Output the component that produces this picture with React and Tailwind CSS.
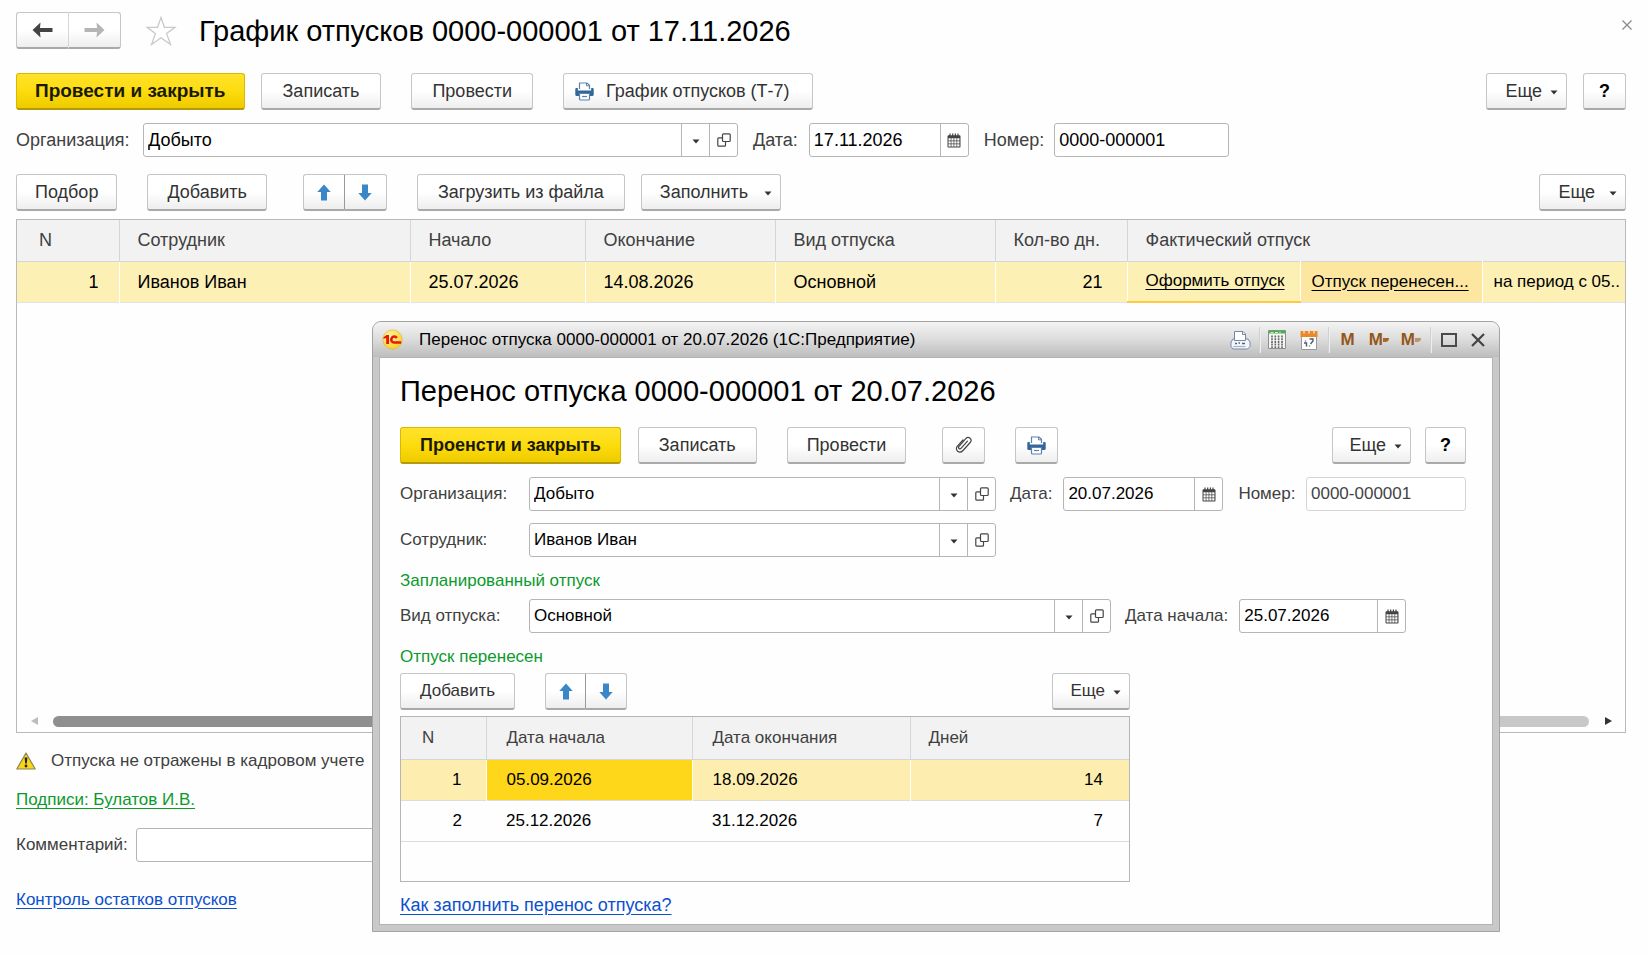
import { useState } from 'react';
import clsx from 'clsx';

/* ---------- icons ---------- */

const Caret = () => (
    <svg width="8" height="7" viewBox="0 0 8 7" className="shrink-0" aria-hidden="true">
        <path d="M0.5 2.500h7L4 6.500z" fill="#333" />
    </svg>
);

const NavArrow = ({ flip, color }) => (
    <svg width="21" height="16" viewBox="0 0 21 16" className={clsx(flip && 'rotate-180')} aria-hidden="true">
        <path d="M0.5 8 8.500 0.500 8 6h12.500v4H8l.5 5.500z" fill={color} />
    </svg>
);

const MoveArrow = ({ down }) => (
    <svg width="14" height="17" viewBox="0 0 14 17" className={clsx(down && 'rotate-180')} aria-hidden="true">
        <path d="M7 0.500 13.700 8H10v8.500H4V8H0.300z" fill="#3a87c8" />
    </svg>
);

const StarIcon = () => (
    <svg width="32" height="32" viewBox="0 0 32 32" aria-hidden="true">
        <path
            d="M16 2.500 19.400 12.300H30L21.600 18.600 25.500 29.500 16 22.800 6.500 29.500 10.400 18.600 2 12.300H12.600z"
            fill="#fff"
            stroke="#c9c9c9"
            strokeWidth="1.300"
        />
    </svg>
);

const PrinterIcon = () => (
    <svg width="19" height="19" viewBox="0 0 19 19" className="shrink-0" aria-hidden="true">
        <path d="M4.500 7V1h7.500l2.500 2.300V7" fill="#fff" stroke="#5b83ad" strokeWidth="1.200" />
        <path d="M11.500 1v2.800h3" fill="none" stroke="#5b83ad" />
        <path d="M1.500 6h1.300v2.500h13.400V6h1.300c.8 0 1.200.5 1.200 1.200v5.600c0 .7-.5 1.200-1.200 1.200h-16c-.7 0-1.200-.5-1.200-1.200V7.200C.3 6.500.8 6 1.500 6z" fill="#336699" />
        <path d="M4.500 11.500h10V17c0 .6-.4 1-1 1h-8c-.6 0-1-.4-1-1z" fill="#fff" stroke="#5b83ad" strokeWidth="1.200" />
        <path d="M7 14.500h5" stroke="#5b83ad" strokeWidth="1.200" />
    </svg>
);

const OpenIcon = () => (
    <svg width="14" height="14" viewBox="0 0 14 14" fill="none" stroke="#444" strokeWidth="1.200" aria-hidden="true">
        <rect x="5.500" y="0.800" width="7.700" height="7.700" rx="1" />
        <path d="M5.500 4.800H1.800c-.6 0-1 .4-1 1v6.400c0 .6.4 1 1 1h5.700c.6 0 1-.4 1-1V8.500" />
    </svg>
);

const CalendarIcon = () => (
    <svg width="14" height="15" viewBox="0 0 14 15" aria-hidden="true">
        <path d="M0.500 3.500c0-.8.4-1.200 1.200-1.200h10.600c.8 0 1.200.4 1.200 1.200v10c0 .6-.4 1-1 1h-11c-.6 0-1-.4-1-1z" fill="#444" />
        <path d="M3 0.500v3M5.700 0.500v3M8.400 0.500v3M11 0.500v3" stroke="#444" strokeWidth="1.200" />
        <path
            d="M1.500 5.300h2.200v2.200H1.500zM4.400 5.300h2.200v2.200H4.400zM7.300 5.300h2.200v2.200H7.300zM10.200 5.300h2.200v2.200h-2.200zM1.500 8.300h2.200v2.200H1.500zM4.400 8.300h2.200v2.200H4.400zM7.300 8.300h2.200v2.200H7.300zM10.200 8.300h2.200v2.200h-2.200zM1.500 11.300h2.200v2.200H1.500zM4.400 11.300h2.200v2.200H4.400zM7.300 11.300h2.200v2.200H7.300zM10.200 11.300h2.200v2.200h-2.200z"
            fill="#fff"
        />
    </svg>
);

const ClipIcon = () => (
    <svg width="18" height="18" viewBox="0 0 18 18" fill="none" stroke="#444" strokeWidth="1.200" strokeLinecap="round" aria-hidden="true">
        <path d="M12.500 5.200 6.200 12.200c-.7.800-1.600.8-2.200.3-.7-.6-.6-1.500 0-2.200L10.800 2.700c1.200-1.300 3-1.400 4.200-.4 1.300 1.100 1.300 2.900.2 4.200L8 14.500c-1.500 1.700-3.800 2-5.400.7-1.500-1.300-1.600-3.500-.2-5.100L8 3.800" />
    </svg>
);

const WarningIcon = () => (
    <svg width="20" height="18" viewBox="0 0 20 18" aria-hidden="true">
        <path d="M10 1 19.200 17H0.800z" fill="#f9d616" stroke="#8b8458" strokeWidth="1.200" strokeLinejoin="round" />
        <path d="M8.600 5.500h2.800l-.6 6H9.200z" fill="#222" />
        <circle cx="10" cy="14" r="1.400" fill="#222" />
    </svg>
);

const Logo = () => (
    <svg width="21" height="21" viewBox="0 0 21 21" className="shrink-0" aria-hidden="true">
        <defs>
            <radialGradient id="logo" cx="0.4" cy="0.3" r="0.8">
                <stop offset="0" stopColor="#fff7a0" />
                <stop offset="1" stopColor="#fbc812" />
            </radialGradient>
        </defs>
        <circle cx="10.500" cy="10.500" r="9.700" fill="url(#logo)" stroke="#d9b44a" strokeWidth="0.600" />
        <path d="M1.500 8.200 4.500 6h2.500v9H4.200V9L1.500 9.800z" fill="#e3180f" />
        <path d="M14.800 9a3 3 0 1 0-2.600 4.600h7" fill="none" stroke="#e3180f" strokeWidth="2.500" />
    </svg>
);

const TitlePrinterIcon = () => (
    <svg width="21" height="20" viewBox="0 0 21 20" aria-hidden="true">
        <path d="M4.500 10V1.500h8.500l2.500 2.500v6" fill="#fff" stroke="#7788a2" />
        <path d="M12.500 1.500v3h3" fill="none" stroke="#7788a2" />
        <path d="M4.500 9H3l-2 3v4.500L3 19h14.500l2.500-2.500V12l-2-3h-2.500v1.500h-11z" fill="#f4f6fa" stroke="#7788a2" />
        <path d="M5 13.500h2M8.500 13h1.500M12 13.500h3" stroke="#4c6390" strokeWidth="1.600" />
        <path d="M3.500 16.500h12" stroke="#a7b2c4" strokeWidth="1.200" />
    </svg>
);

const CalcIcon = () => (
    <svg width="18" height="19" viewBox="0 0 18 19" aria-hidden="true">
        <path d="M0.500 0.500h17v18H0.500z" fill="#f6f6f6" stroke="#8b8f8b" />
        <path d="M1 1h16v2.500H1z" fill="#45b045" />
        <path d="M2.500 2.500h3M7 2.500h3M12 1.500v2" stroke="#c9efc9" />
        <path d="M4 5.500V18M7.300 5.500V18M10.600 5.500V18M14 5.500V18" stroke="#666" strokeWidth="1.600" strokeDasharray="2 0.700" />
    </svg>
);

const DayIcon = () => (
    <svg width="18" height="20" viewBox="0 0 18 20" aria-hidden="true">
        <path d="M1.500 3h15v16.500h-15z" fill="#fff" stroke="#9a9a9a" />
        <path d="M0.500 1h17v6H0.500z" fill="#e88a2b" />
        <path d="M4 0v3.500M9 0v3.500M14 0v3.500" stroke="#fbe0bd" strokeWidth="1.400" />
        <path d="M4 13h2.500v3.500M9.500 9h3.500v2l-2.500 3M5.500 10.500v1M9.500 15.500v1" fill="none" stroke="#4e5a70" strokeWidth="1.400" />
    </svg>
);

/* ---------- controls ---------- */

const buttonBase =
    'inline-flex h-[37px] shrink-0 items-center justify-center whitespace-nowrap rounded-[3px] border border-[#c6c6c6] border-b-2 border-b-[#a9a9a9] bg-linear-to-b from-white from-50% to-[#eeeeee]';

const Button = ({ className, children, ...props }) => (
    <button type="button" className={clsx(buttonBase, 'text-[#333]', className)} {...props}>
        {children}
    </button>
);

const PrimaryButton = ({ className, children }) => (
    <button
        type="button"
        className={clsx(
            'inline-flex h-[37px] shrink-0 items-center whitespace-nowrap rounded-[3px] border border-[#d8b900] border-b-2 border-b-[#b39a06] bg-linear-to-b from-[#ffe22a] via-[#fddc0c] to-[#eecb00] font-bold text-[#1a1a00]',
            className
        )}
    >
        {children}
    </button>
);

const MoreButton = ({ className = 'gap-2 pl-[18px]' }) => (
    <Button className={clsx('pr-2', className)}>
        Еще
        <Caret />
    </Button>
);

const MoveButtons = ({ size = 'w-[42px]' }) => (
    <div className="flex">
        <Button aria-label="Переместить вверх" className={clsx('rounded-r-none border-r-[#999]', size)}>
            <MoveArrow />
        </Button>
        <Button aria-label="Переместить вниз" className={clsx('rounded-l-none border-l-0', size)}>
            <MoveArrow down />
        </Button>
    </div>
);

const FieldButton = ({ label, children }) => (
    <button type="button" aria-label={label} className="flex w-7 shrink-0 items-center justify-center border-l border-[#b5b5b5]">
        {children}
    </button>
);

const Field = ({ id, value, kind, muted, className }) => {
    const [text, setText] = useState(value);
    return (
        <div className={clsx('flex h-[34px] overflow-hidden rounded-[3px] border bg-white', muted ? 'border-[#d4d4d4]' : 'border-[#b5b5b5]', className)}>
            <input
                id={id}
                type="text"
                value={text}
                onChange={(e) => setText(e.target.value)}
                className={clsx('w-full min-w-0 flex-1 bg-transparent px-1 outline-none', muted ? 'text-[#444]' : 'text-black')}
            />
            {kind === 'ref' && (
                <>
                    <FieldButton label="Выбрать из списка">
                        <Caret />
                    </FieldButton>
                    <FieldButton label="Открыть">
                        <OpenIcon />
                    </FieldButton>
                </>
            )}
            {kind === 'date' && (
                <FieldButton label="Календарь">
                    <CalendarIcon />
                </FieldButton>
            )}
        </div>
    );
};

const Label = ({ htmlFor, className, children }) => (
    <label htmlFor={htmlFor} className={clsx('shrink-0 whitespace-nowrap text-[#404040]', className)}>
        {children}
    </label>
);

const Separator = () => <span className="h-[26px] w-px bg-[#d0d0d0] shadow-[1px_0_0_#eeeeee]" />;

/* ---------- transfer window ---------- */

const transferRows = [
    { n: 1, from: '05.09.2026', to: '18.09.2026', days: 14 },
    { n: 2, from: '25.12.2026', to: '31.12.2026', days: 7 },
];

const TransferWindow = () => (
    <section className="absolute left-[372px] right-[147px] top-[321px] rounded-t-[9px] border border-[#a3a3a3] bg-[#c9c9c9] px-1.5 pb-1.5 text-[17px]">
        <header className="-mx-1.5 flex h-[35px] items-center rounded-t-[8px] bg-linear-to-b from-[#f4f4f4] via-[#dcdcdc] to-[#bdbdbd] pl-[9px] pr-3.5">
            <Logo />
            <span className="ml-4 whitespace-nowrap text-black">Перенос отпуска 0000-000001 от 20.07.2026 (1С:Предприятие)</span>
            <div className="ml-auto flex items-center">
                <button type="button" aria-label="Печать" className="mr-2"><TitlePrinterIcon /></button>
                <Separator />
                <button type="button" aria-label="Калькулятор" className="ml-2"><CalcIcon /></button>
                <button type="button" aria-label="Календарь" className="ml-3.5 mr-[10px]"><DayIcon /></button>
                <Separator />
                <div className="flex items-center gap-3 pl-[11px] pr-[9px] font-bold text-[#95561a]">
                    <button type="button" className="mr-0.5">M</button>
                    <button type="button" className="flex items-center">M<span className="h-1 w-1.5 rounded-br-sm bg-[#a8661f]" /></button>
                    <button type="button" className="flex items-center">M<span className="h-1 w-1.5 rounded-br-sm bg-[#bd9468]" /></button>
                </div>
                <Separator />
                <button type="button" aria-label="Развернуть" className="ml-[10px] h-3.5 w-4 border-2 border-[#4a4a4a]" />
                <button type="button" aria-label="Закрыть" className="ml-3.5">
                    <svg width="14" height="14" viewBox="0 0 14 14" stroke="#444" strokeWidth="2.200" aria-hidden="true">
                        <path d="M1 1l12 12M13 1 1 13" />
                    </svg>
                </button>
            </div>
        </header>

        <div className="border border-[#b3b3b3] bg-[#fefefe] pb-[7px] pl-5 pr-[26px] pt-[17px]">
            <h2 className="text-[29px] leading-8 text-black">Перенос отпуска 0000-000001 от 20.07.2026</h2>

            <div className="mt-5 flex items-center justify-between text-[18px]">
                <div className="flex items-center gap-[30px]">
                    <div className="flex gap-[17px]">
                        <PrimaryButton className="px-[19px]">Проенсти и закрыть</PrimaryButton>
                        <Button className="px-5">Записать</Button>
                    </div>
                    <Button className="px-[19px]">Провести</Button>
                    <div className="ml-1.5 flex gap-[30px]">
                        <Button aria-label="Вложения" className="w-[43px]"><ClipIcon /></Button>
                        <Button aria-label="Печать" className="w-[43px]"><PrinterIcon /></Button>
                    </div>
                </div>
                <div className="flex gap-3.5">
                    <MoreButton className="gap-2 pl-4" />
                    <Button className="w-[41px] font-bold text-black">?</Button>
                </div>
            </div>

            <div className="mt-[13px] flex items-center">
                <Label htmlFor="t-org" className="w-[129px]">Организация:</Label>
                <Field id="t-org" value="Добыто" kind="ref" className="max-w-[467px] flex-1" />
                <Label htmlFor="t-date" className="ml-3.5 mr-[11px]">Дата:</Label>
                <Field id="t-date" value="20.07.2026" kind="date" className="w-40" />
                <Label htmlFor="t-num" className="ml-[15px] mr-[9px]">Номер:</Label>
                <Field id="t-num" value="0000-000001" muted className="ml-auto w-40" />
            </div>

            <div className="mt-3 flex items-center">
                <Label htmlFor="t-person" className="w-[129px]">Сотрудник:</Label>
                <Field id="t-person" value="Иванов Иван" kind="ref" className="max-w-[467px] flex-1" />
            </div>

            <h3 className="mt-3 leading-6 text-[#0b9a2c]">Запланированный отпуск</h3>
            <div className="mt-1.5 flex items-center">
                <Label htmlFor="t-kind" className="w-[129px]">Вид отпуска:</Label>
                <Field id="t-kind" value="Основной" kind="ref" className="max-w-[582px] flex-1" />
                <Label htmlFor="t-start" className="ml-3.5 mr-[11px]">Дата начала:</Label>
                <Field id="t-start" value="25.07.2026" kind="date" className="w-[167px]" />
            </div>

            <h3 className="mt-3 leading-6 text-[#0b9a2c]">Отпуск перенесен</h3>
            <div className="max-w-[730px]">
                <div className="mt-1 flex items-center justify-between">
                    <div className="flex gap-[30px]">
                        <Button className="px-[19px]">Добавить</Button>
                        <MoveButtons size="w-[41px]" />
                    </div>
                    <MoreButton className="gap-2 pl-[17px]" />
                </div>

                <div className="mt-1.5 border border-[#b5b5b5] pb-[39px]">
                    <table className="w-full table-fixed border-collapse text-black">
                        <colgroup>
                            <col className="w-[85px]" />
                            <col className="w-[206px]" />
                            <col className="w-[218px]" />
                            <col />
                        </colgroup>
                        <thead>
                            <tr className="h-[42px] border-b border-[#d6d6d6] bg-[#f2f2f2] text-left text-[#404040]">
                                <th className="border-r border-[#d6d6d6] pl-[21px] font-normal">N</th>
                                <th className="border-r border-[#d6d6d6] pl-5 font-normal">Дата начала</th>
                                <th className="border-r border-[#d6d6d6] pl-5 font-normal">Дата окончания</th>
                                <th className="pl-[18px] font-normal">Дней</th>
                            </tr>
                        </thead>
                        <tbody>
                            {transferRows.map((row, i) => {
                                const current = i === 0;
                                const divider = current && 'border-r border-white';
                                return (
                                    <tr key={row.n} className={clsx('h-[41px] border-b border-[#dcdcdc]', current && 'bg-[#fdeeb0]')}>
                                        <td className={clsx('pr-6 text-right', divider)}>{row.n}</td>
                                        <td className={clsx('pl-5', divider, current && 'bg-[#fed61a]')}>{row.from}</td>
                                        <td className={clsx('pl-5', divider)}>{row.to}</td>
                                        <td className="pr-[26px] text-right">{row.days}</td>
                                    </tr>
                                );
                            })}
                        </tbody>
                    </table>
                </div>
            </div>

            <a href="#help" className="mt-[11px] block w-fit text-[18px] leading-6 text-[#0b50cc] underline underline-offset-3">Как заполнить перенос отпуска?</a>
        </div>
    </section>
);

/* ---------- schedule ---------- */

const headCell = 'border-r border-[#d6d6d6] pl-[18px] font-normal';
const bodyCell = 'border-r border-white pl-[18px]';

const App = () => (
    <main className="relative min-h-screen bg-[#fefefe] pb-8 pl-4 pr-[21px] pt-3 font-['Liberation_Sans',Arial,sans-serif] text-[18px] leading-6 text-[#333]">
        <div className="flex items-center">
            <div className="flex">
                <Button aria-label="Назад" className="w-[53px] rounded-r-none border-r-[#d6d6d6]"><NavArrow color="#444" /></Button>
                <Button aria-label="Вперед" className="w-[52px] rounded-l-none border-l-0"><NavArrow flip color="#b5b5b5" /></Button>
            </div>
            <button type="button" aria-label="В избранное" className="ml-6"><StarIcon /></button>
            <h1 className="ml-[22px] text-[29px] leading-8 text-black">График отпусков 0000-000001 от 17.11.2026</h1>
            <button type="button" aria-label="Закрыть" className="mb-3 ml-auto -mr-1.5">
                <svg width="10" height="10" viewBox="0 0 10 10" stroke="#8a8a8a" strokeWidth="1.300" aria-hidden="true">
                    <path d="M0.500 0.500l9 9M9.500 0.500l-9 9" />
                </svg>
            </button>
        </div>

        <div className="mt-6 flex items-center justify-between">
            <div className="flex gap-[30px]">
                <div className="flex gap-4">
                    <PrimaryButton className="px-[18px] text-[19px]">Провести и закрыть</PrimaryButton>
                    <Button className="px-[21px]">Записать</Button>
                </div>
                <Button className="px-5">Провести</Button>
                <Button className="gap-3 pl-[11px] pr-[22px]">
                    <PrinterIcon />
                    График отпусков (Т-7)
                </Button>
            </div>
            <div className="flex gap-4">
                <MoreButton />
                <Button className="w-[43px] font-bold text-black">?</Button>
            </div>
        </div>

        <div className="mt-[13px] flex items-center">
            <Label htmlFor="org" className="w-[127px]">Организация:</Label>
            <Field id="org" value="Добыто" kind="ref" className="max-w-[595px] flex-1" />
            <Label htmlFor="date" className="ml-[15px] mr-[11px]">Дата:</Label>
            <Field id="date" value="17.11.2026" kind="date" className="w-40" />
            <Label htmlFor="num" className="ml-[15px] mr-[10px]">Номер:</Label>
            <Field id="num" value="0000-000001" className="w-[175px]" />
        </div>

        <div className="mt-[17px] flex items-center justify-between">
            <div className="flex gap-[30px]">
                <Button className="px-[18px]">Подбор</Button>
                <Button className="px-[19px]">Добавить</Button>
                <div className="ml-1.5"><MoveButtons /></div>
                <div className="flex gap-4">
                    <Button className="px-5">Загрузить из файла</Button>
                    <Button className="gap-4 pl-[18px] pr-2">Заполнить<Caret /></Button>
                </div>
            </div>
            <MoreButton className="gap-3.5 pl-[18px]" />
        </div>

        <div className="mt-2 flex h-[514px] flex-col justify-between overflow-hidden border border-[#b9b9b9]">
            <table className="w-full table-fixed border-collapse text-black">
                <colgroup>
                    <col className="w-[102px]" />
                    <col className="w-[291px]" />
                    <col className="w-[175px]" />
                    <col className="w-[190px]" />
                    <col className="w-[220px]" />
                    <col className="w-[132px]" />
                    <col className="w-[173px]" />
                    <col className="w-[182px]" />
                    <col />
                </colgroup>
                <thead>
                    <tr className="h-[41px] border-b border-[#d6d6d6] bg-[#f2f2f2] text-left text-[#404040]">
                        <th className="border-r border-[#d6d6d6] pl-[22px] font-normal">N</th>
                        <th className={headCell}>Сотрудник</th>
                        <th className={headCell}>Начало</th>
                        <th className={headCell}>Окончание</th>
                        <th className={headCell}>Вид отпуска</th>
                        <th className={headCell}>Кол-во дн.</th>
                        <th colSpan={3} className="pl-[18px] font-normal">Фактический отпуск</th>
                    </tr>
                </thead>
                <tbody>
                    <tr className="h-[41px] border-b border-[#dfe3ea] bg-[#fdf0b4]">
                        <td className="border-r border-white pr-5 text-right">1</td>
                        <td className={bodyCell}>Иванов Иван</td>
                        <td className={bodyCell}>25.07.2026</td>
                        <td className={bodyCell}>14.08.2026</td>
                        <td className={bodyCell}>Основной</td>
                        <td className="border-r border-white pr-6 text-right">21</td>
                        <td className="whitespace-nowrap border-b-2 border-r border-b-[#fbcb45] border-r-white pl-[18px] text-[17px]">
                            <a href="#issue" className="underline underline-offset-3">Оформить отпуск</a>
                        </td>
                        <td className="whitespace-nowrap border-r border-white bg-[#fde7a0] pl-[11px] text-[17px]">
                            <a href="#moved" className="underline underline-offset-3">Отпуск перенесен...</a>
                        </td>
                        <td className="overflow-hidden whitespace-nowrap pl-[11px] text-[17px]">на период с 05..</td>
                    </tr>
                </tbody>
            </table>

            <div className="flex h-[22px] items-center pl-[14px] pr-[13px]">
                <svg width="7" height="8" viewBox="0 0 7 8" aria-hidden="true"><path d="M7 0v8L0 4z" fill="#bdbdbd" /></svg>
                <div className="ml-[15px] mr-4 h-[11px] flex-1 rounded-full bg-linear-to-r from-[#8f8f8f] from-60% to-[#c8c8c8] to-60%" />
                <svg width="7" height="8" viewBox="0 0 7 8" aria-hidden="true"><path d="M0 0v8l7-4z" fill="#333" /></svg>
            </div>
        </div>

        <div className="text-[17px]">
            <div className="mt-4 flex items-center gap-[15px] text-[#404040]">
                <WarningIcon />
                <span>Отпуска не отражены в кадровом учете</span>
            </div>
            <div className="mt-[15px]">
                <a href="#signatures" className="text-[#0b9a2c] underline underline-offset-3">Подписи: Булатов И.В.</a>
            </div>
            <div className="mt-4 flex items-center">
                <Label htmlFor="comment" className="w-[120px]">Комментарий:</Label>
                <Field id="comment" value="" className="max-w-[595px] flex-1" />
            </div>
            <div className="mt-[26px]">
                <a href="#balance" className="text-[#0b50cc] underline underline-offset-3">Контроль остатков отпусков</a>
            </div>
        </div>

        <TransferWindow />
    </main>
);

export default App;
